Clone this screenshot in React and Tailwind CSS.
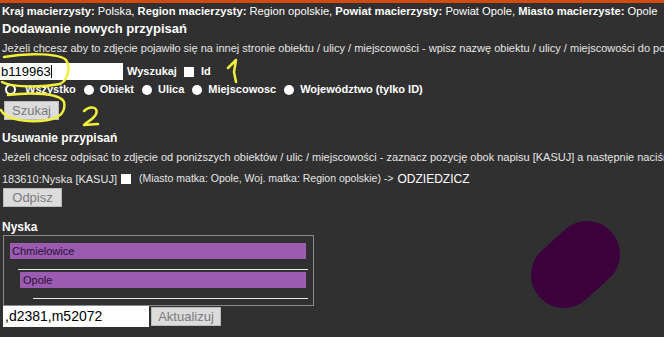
const radios = [
  { label: 'Wszystko', checked: true },
  { label: 'Obiekt' },
  { label: 'Ulica' },
  { label: 'Miejscowosc' },
  { label: 'Województwo (tylko ID)' },
];

function Radio({ checked }) {
  return checked ? (
    <span className="inline-block w-[11px] h-[11px] rounded-full border-2 border-white bg-[#303030]" />
  ) : (
    <span className="inline-block w-[10px] h-[10px] rounded-full bg-white" />
  );
}

function Btn({ children, className = '' }) {
  return (
    <span className={`inline-flex items-center justify-center bg-[#dcdcdc] text-[#7a7a7a] text-[13px] border border-[#bbb] ${className}`}>
      {children}
    </span>
  );
}

export default function App() {
  return (
    <div className="relative w-[664px] h-[337px] overflow-hidden bg-[#303030] text-white whitespace-nowrap font-['Liberation_Sans',Arial,sans-serif]">
      <div className="h-[3px] bg-[#d24a12]" />

      <div className="pl-[2px] text-[11.2px] leading-[14px] mt-[1px]">
        <b>Kraj macierzysty:</b> Polska, <b>Region macierzysty:</b> Region opolskie,{' '}
        <b>Powiat macierzysty:</b> Powiat Opole, <b>Miasto macierzyste:</b> Opole
      </div>
      <div className="pl-[2px] text-[13px] leading-[16px] font-bold mt-[3px]">Dodawanie nowych przypisań</div>
      <div className="pl-[2px] text-[11px] leading-[14px] text-[#e6e6e6] mt-[4px]">
        Jeżeli chcesz aby to zdjęcie pojawiło się na innej stronie obiektu / ulicy / miejscowości - wpisz nazwę obiektu / ulicy / miejscowości do pola
      </div>

      <div className="flex items-center mt-[8px] h-[17px]">
        <span className="w-[123px] h-[17px] bg-white text-black text-[13px] leading-[17px] pl-[1px] flex items-center">
          b119963<span className="w-[1px] h-[13px] bg-black" />
        </span>
        <span className="ml-[4px] text-[11px] font-bold">Wyszukaj</span>
        <span className="ml-[7px] w-[10px] h-[10px] bg-white" />
        <span className="ml-[7px] text-[11px] font-bold">Id</span>
      </div>

      <div className="flex items-center pl-[5px] mt-[3px] h-[13px] text-[11px] font-bold">
        {radios.map((r, i) => (
          <span key={i} className={`flex items-center mr-[8px] ${i === 0 ? 'gap-[9px]' : 'gap-[6px]'}`}>
            <Radio checked={r.checked} />
            <span>{r.label}</span>
          </span>
        ))}
      </div>

      <div className="pl-[4px] mt-[2px]">
        <Btn className="w-[55px] h-[19px]">Szukaj</Btn>
      </div>

      <div className="pl-[2px] text-[12px] leading-[14px] font-bold mt-[9px]">Usuwanie przypisań</div>
      <div className="pl-[2px] text-[11px] leading-[14px] text-[#e6e6e6] mt-[5px]">
        Jeżeli chcesz odpisać to zdjęcie od poniższych obiektów / ulic / miejscowości - zaznacz pozycję obok napisu [KASUJ] a następnie naciśnij
      </div>
      <div className="flex items-center pl-[2px] mt-[8px] h-[14px] text-[11px] text-[#e6e6e6]">
        <span>183610:Nyska [KASUJ]</span>
        <span className="ml-[4px] w-[10px] h-[10px] bg-white" />
        <span className="ml-[8px] text-[10.5px]">(Miasto matka: Opole, Woj. matka: Region opolskie) -&gt;</span>
        <span className="ml-[4px] text-[12px] text-white">ODZIEDZICZ</span>
      </div>
      <div className="pl-[3px] mt-[-1px]">
        <Btn className="w-[59px] h-[19px]">Odpisz</Btn>
      </div>

      <div className="pl-[2px] text-[12px] leading-[14px] font-bold mt-[11px]">Nyska</div>
      <div className="ml-[3px] mt-[1px] w-[311px] h-[71px] border border-[#8a8a8a] pt-[7px] pl-[6px] pr-[7px]">
        <div className="h-[16px] bg-[#9a5bb0] text-[#2a1236] text-[11px] leading-[16px] pl-[2px]">Chmielowice</div>
        <div className="ml-[8px] mr-[-2px] mt-[10px] h-[1px] bg-[#e8e8e8]" />
        <div className="ml-[10px] mt-[2px] h-[16px] bg-[#9a5bb0] text-[#2a1236] text-[11px] leading-[16px] pl-[3px]">Opole</div>
        <div className="ml-[23px] mr-[-2px] mt-[10px] h-[1px] bg-[#e8e8e8]" />
      </div>
      <div className="flex items-center">
        <span className="ml-[3px] w-[146px] h-[21px] bg-white text-black text-[14px] leading-[21px] pl-[2px]">,d2381,m52072</span>
        <Btn className="ml-[2px] w-[70px] h-[19px]">Aktualizuj</Btn>
      </div>

      <svg className="absolute left-0 top-0 pointer-events-none" width="664" height="337" viewBox="0 0 664 337">
        <line x1="564" y1="275" x2="587" y2="254" stroke="#3c003c" strokeWidth="66" strokeLinecap="round" />
        <g fill="none" stroke="#f2ee3a" strokeWidth="2.5" strokeLinecap="round" strokeLinejoin="round">
          <path d="M4 57 C 30 52, 60 54, 66 60 C 71 68, 68 80, 60 84 C 40 88, 10 87, 2 82" />
          <path d="M228 68 L236 60 L234 72 L236 82" />
          <path d="M8 95 C 30 92, 60 93, 64 102 C 66 112, 60 120, 40 121 C 20 122, 4 118, 1 110" />
          <path d="M84 111 C 90 105, 99 107, 96 114 C 94 119, 88 121, 84 125 L 98 124" />
        </g>
      </svg>
    </div>
  );
}
